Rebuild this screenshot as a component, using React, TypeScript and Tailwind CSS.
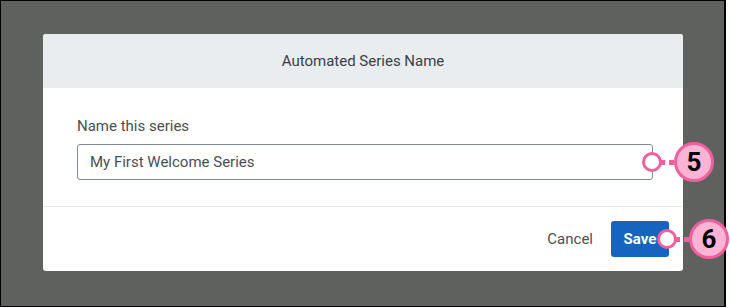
function Marker({ n }: { n: string }) {
  return (
    <div className="flex items-center">
      <div className="w-[20px] h-[20px] rounded-full bg-white border-[3px] border-[#f0609e]" />
      <div className="w-[4px] h-[5px] bg-[#f0609e] -ml-[1px]" />
      <div className="w-[5px] h-[5px] bg-[#f0609e] ml-[4px]" />
      <div className="w-[40px] h-[40px] rounded-full bg-[#fbb4d4] border-[3px] border-[#f0609e] flex items-center justify-center text-[26px] font-bold text-black leading-none">
        {n}
      </div>
    </div>
  );
}

export default function App() {
  return (
    <div className="relative w-[726px] h-[307px] border border-r-2 border-black bg-[#5f615f] pl-[42px] pt-[33px]" style={{ fontFamily: 'Roboto, "Liberation Sans", sans-serif' }}>
      <div className="w-[640px] h-[237px] bg-white rounded-[3px] flex flex-col overflow-hidden">
        <div className="h-[54px] bg-[#e9edf0] flex items-center justify-center text-[15px] font-normal text-[#3b4045]">
          Automated Series Name
        </div>
        <div className="pl-[34px] pr-[30px] pt-[28px] pb-[26px] border-b border-[#e6eaee]">
          <div className="text-[15px] leading-[20px] text-[#4a4f54] mb-[8px]">Name this series</div>
          <div className="h-[36px] border border-[#7d8b93] rounded-[3px] flex items-center pl-[12px] text-[15px] text-[#4a4f54]">
            My First Welcome Series
          </div>
        </div>
        <div className="flex-1 flex items-center justify-end pr-[14px] gap-[18px]">
          <span className="text-[15px] text-[#4a4f54]">Cancel</span>
          <div className="h-[36px] w-[58px] bg-[#1565c0] rounded-[3px] flex items-center justify-center text-white font-bold text-[15px]">
            Save
          </div>
        </div>
      </div>

      <div className="absolute left-[641px] top-[141px]">
        <Marker n="5" />
      </div>
      <div className="absolute left-[656px] top-[218px]">
        <Marker n="6" />
      </div>
    </div>
  );
}
